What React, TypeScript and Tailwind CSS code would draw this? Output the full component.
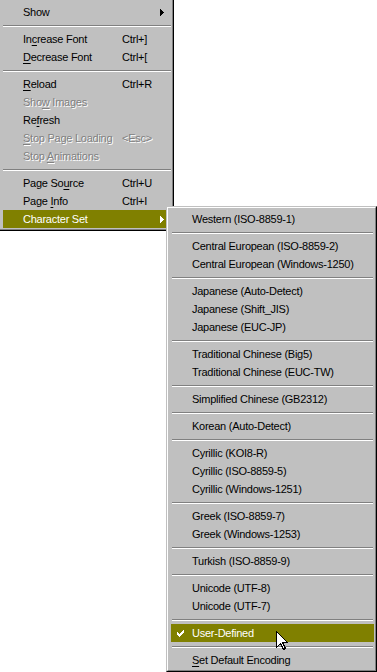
import React from "react";

type Item =
  | { sep: true }
  | {
      sep?: false;
      label: React.ReactNode;
      shortcut?: string;
      arrow?: boolean;
      disabled?: boolean;
      active?: boolean;
      checked?: boolean;
    };

const U = ({ children }: { children: React.ReactNode }) => <span className="underline underline-offset-[2px] decoration-1">{children}</span>;

const Arrow = ({ color }: { color: string }) => (
  <svg width="4" height="7" viewBox="0 0 4 7" shapeRendering="crispEdges" className="block">
    <rect x="0" y="0" width="1" height="7" fill={color} />
    <rect x="1" y="1" width="1" height="5" fill={color} />
    <rect x="2" y="2" width="1" height="3" fill={color} />
    <rect x="3" y="3" width="1" height="1" fill={color} />
  </svg>
);

const Check = ({ color }: { color: string }) => {
  const rows = ["......X", ".....XX", "X...XXX", "XX.XXX.", "XXXXX..", ".XXX...", "..X...."];
  return (
    <svg width="7" height="7" viewBox="0 0 7 7" shapeRendering="crispEdges" className="block">
      {rows.flatMap((r, y) =>
        r.split("").map((c, x) => (c === "X" ? <rect key={`${x}-${y}`} x={x} y={y} width="1" height="1" fill={color} /> : null))
      )}
    </svg>
  );
};

const Sep = ({ inset }: { inset: string }) => (
  <div className="h-[9px] flex flex-col">
    <div className="h-[4px]" />
    <div className={`h-px bg-[#808080] ${inset}`} />
    <div className={`h-px bg-white ${inset}`} />
  </div>
);

const Row = ({ item, gutter, labelW, sub }: { item: Exclude<Item, { sep: true }>; gutter: string; labelW: string; sub: boolean }) => {
  const textCls = item.active
    ? "text-white"
    : item.disabled
    ? "text-[#808080] [text-shadow:1px_1px_0_#ffffff]"
    : "text-black";
  return (
    <div className={`h-[18px] flex items-center ${item.active ? "bg-[#808000]" : ""} ${textCls}`}>
      <div className={`${gutter} h-full flex items-center`}>
        {item.checked && (
          <div className={sub ? "ml-[6px]" : "ml-[5px]"}>
            <Check color={item.active ? "#ffffff" : "#000000"} />
          </div>
        )}
      </div>
      <div className={`${labelW} whitespace-nowrap leading-[18px]`}>{item.label}</div>
      <div className="flex-1 whitespace-nowrap leading-[18px]">{item.shortcut}</div>
      {item.arrow && (
        <div className="w-[4px] mr-[7px]">
          <Arrow color={item.active ? "#ffffff" : "#000000"} />
        </div>
      )}
    </div>
  );
};

const mainItems: Item[] = [
  { label: "Show", arrow: true },
  { sep: true },
  { label: <>In<U>c</U>rease Font</>, shortcut: "Ctrl+]" },
  { label: <><U>D</U>ecrease Font</>, shortcut: "Ctrl+[" },
  { sep: true },
  { label: <><U>R</U>eload</>, shortcut: "Ctrl+R" },
  { label: <>Sho<U>w</U> Images</>, disabled: true },
  { label: <>Re<U>f</U>resh</> },
  { label: <><U>S</U>top Page Loading</>, shortcut: "<Esc>", disabled: true },
  { label: <>Stop <U>A</U>nimations</>, disabled: true },
  { sep: true },
  { label: <>Page So<U>u</U>rce</>, shortcut: "Ctrl+U" },
  { label: <>Page <U>I</U>nfo</>, shortcut: "Ctrl+I" },
  { label: "Character Set", arrow: true, active: true },
];

const subItems: Item[] = [
  { label: "Western (ISO-8859-1)" },
  { sep: true },
  { label: "Central European (ISO-8859-2)" },
  { label: "Central European (Windows-1250)" },
  { sep: true },
  { label: "Japanese (Auto-Detect)" },
  { label: "Japanese (Shift_JIS)" },
  { label: "Japanese (EUC-JP)" },
  { sep: true },
  { label: "Traditional Chinese (Big5)" },
  { label: "Traditional Chinese (EUC-TW)" },
  { sep: true },
  { label: "Simplified Chinese (GB2312)" },
  { sep: true },
  { label: "Korean (Auto-Detect)" },
  { sep: true },
  { label: "Cyrillic (KOI8-R)" },
  { label: "Cyrillic (ISO-8859-5)" },
  { label: "Cyrillic (Windows-1251)" },
  { sep: true },
  { label: "Greek (ISO-8859-7)" },
  { label: "Greek (Windows-1253)" },
  { sep: true },
  { label: "Turkish (ISO-8859-9)" },
  { sep: true },
  { label: "Unicode (UTF-8)" },
  { label: "Unicode (UTF-7)" },
  { sep: true },
  { label: "User-Defined", checked: true, active: true },
  { sep: true },
  { label: <><U>S</U>et Default Encoding</> },
];

const Frame = ({ className, children }: { className: string; children: React.ReactNode }) => (
  <div className={`absolute border border-t-[#c0c0c0] border-l-[#c0c0c0] border-r-black border-b-black bg-[#c0c0c0] ${className}`}>
    <div className="h-full border border-t-white border-l-white border-r-[#808080] border-b-[#808080] pl-[3px] pr-px">
      {children}
    </div>
  </div>
);

export default function App() {
  return (
    <div
      className="relative w-[377px] h-[672px] bg-white overflow-hidden text-[11px] tracking-[-0.25px]"
      style={{ fontFamily: '"Liberation Sans", Arial, sans-serif' }}
    >
      <Frame className="left-[-2px] top-[-2px] w-[176px]">
        <div className="pt-[3px] pb-px">
          {mainItems.map((it, i) =>
            it.sep ? <Sep key={i} inset="" /> : <Row key={i} item={it} gutter="w-[20px]" labelW="w-[99px]" sub={false} />
          )}
        </div>
      </Frame>
      <Frame className="left-[166px] top-[206px] w-[211px]">
        <div className="pt-[2px] pb-px">
          {subItems.map((it, i) =>
            it.sep ? <Sep key={i} inset="mx-px" /> : <Row key={i} item={it} gutter="w-[21px]" labelW="w-auto" sub={true} />
          )}
        </div>
      </Frame>
      <svg className="absolute left-[276px] top-[631px]" width="13" height="20" viewBox="0 0 13 20" shapeRendering="crispEdges">
        <path d="M0.5 0.5 L0.5 16.5 L4.5 12.5 L7.5 18.5 L9.5 17.5 L6.5 11.5 L11.5 11.5 Z" fill="#ffffff" stroke="#000000" strokeWidth="1" />
      </svg>
    </div>
  );
}
